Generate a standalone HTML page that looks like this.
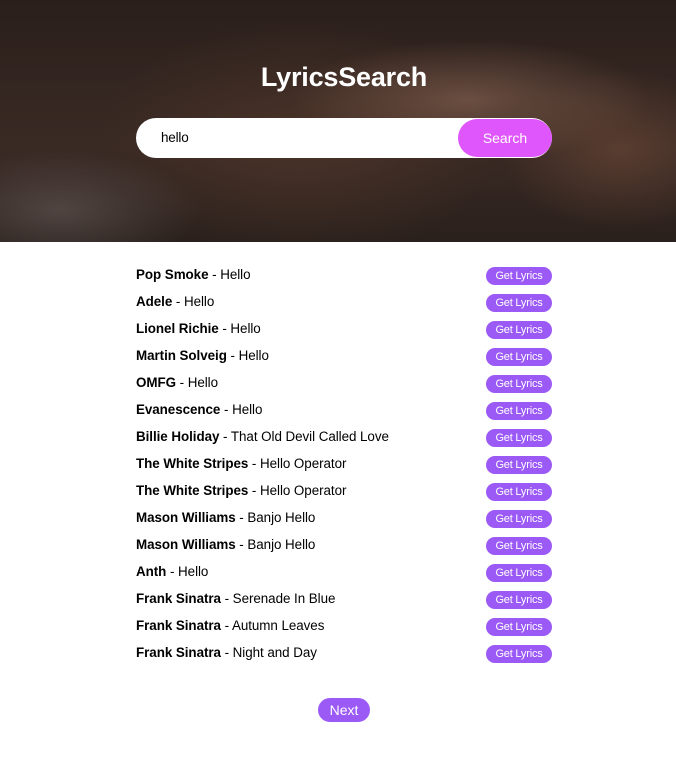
<!DOCTYPE html>
<html><head><meta charset="utf-8"><style>
*{margin:0;padding:0;box-sizing:border-box}
body{width:676px;height:759px;background:#fff;font-family:"Liberation Sans",Arial,sans-serif;overflow:hidden}
header{position:relative;height:242px;background:
radial-gradient(ellipse 180px 60px at 470px 100px,rgba(150,110,90,.55),transparent),
radial-gradient(ellipse 120px 80px at 620px 150px,rgba(120,80,60,.5),transparent),
radial-gradient(ellipse 140px 60px at 60px 210px,rgba(140,130,130,.35),transparent),
radial-gradient(ellipse 200px 120px at 300px 140px,rgba(90,60,45,.5),transparent),
linear-gradient(180deg,#2a1f1b,#3a2a24 60%,#2a201c);}
h1{position:absolute;top:62px;width:100%;text-align:center;color:#fff;font-size:27px;font-weight:bold;padding-left:12px;letter-spacing:-.2px}
.search{position:absolute;left:136px;top:118px;width:416px;height:40px;background:#fff;border-radius:20px}
.search span{position:absolute;left:25px;top:12px;font-size:13.5px;color:#000;letter-spacing:-.2px}
.search b{position:absolute;right:0;top:1px;width:94px;height:38px;border-radius:19px;background:#e056fd;color:#fff;font-weight:normal;font-size:14px;text-align:center;line-height:38px}
ul{list-style:none;position:absolute;left:136px;top:262px;width:416px}
li{height:27px;position:relative;font-size:13.4px;letter-spacing:-.05px;line-height:26px;color:#000}
li i{position:absolute;right:0;top:5px;width:66px;height:18px;border-radius:9px;background:#9b59f6;color:#fff;font-style:normal;font-size:11px;letter-spacing:-.2px;text-align:center;line-height:18px}
.next{position:absolute;left:318px;top:698px;width:52px;height:24px;border-radius:12px;background:#9b59f6;color:#fff;font-size:14px;text-align:center;line-height:24px}
</style></head><body>
<header><h1>LyricsSearch</h1><div class="search"><span>hello</span><b>Search</b></div></header>
<ul>
<li><b>Pop Smoke</b> - Hello<i>Get Lyrics</i></li>
<li><b>Adele</b> - Hello<i>Get Lyrics</i></li>
<li><b>Lionel Richie</b> - Hello<i>Get Lyrics</i></li>
<li><b>Martin Solveig</b> - Hello<i>Get Lyrics</i></li>
<li><b>OMFG</b> - Hello<i>Get Lyrics</i></li>
<li><b>Evanescence</b> - Hello<i>Get Lyrics</i></li>
<li><b>Billie Holiday</b> - That Old Devil Called Love<i>Get Lyrics</i></li>
<li><b>The White Stripes</b> - Hello Operator<i>Get Lyrics</i></li>
<li><b>The White Stripes</b> - Hello Operator<i>Get Lyrics</i></li>
<li><b>Mason Williams</b> - Banjo Hello<i>Get Lyrics</i></li>
<li><b>Mason Williams</b> - Banjo Hello<i>Get Lyrics</i></li>
<li><b>Anth</b> - Hello<i>Get Lyrics</i></li>
<li><b>Frank Sinatra</b> - Serenade In Blue<i>Get Lyrics</i></li>
<li><b>Frank Sinatra</b> - Autumn Leaves<i>Get Lyrics</i></li>
<li><b>Frank Sinatra</b> - Night and Day<i>Get Lyrics</i></li>
</ul>
<div class="next">Next</div>
</body></html>
